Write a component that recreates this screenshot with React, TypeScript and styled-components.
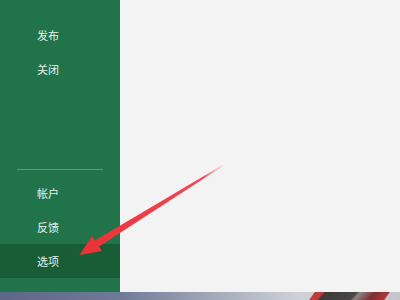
import React from 'react'
import styled, { createGlobalStyle } from 'styled-components'

const GlobalStyle = createGlobalStyle`
  html, body {
    margin: 0;
    padding: 0;
    background: #f3f3f3;
  }
  body {
    font-family: "Noto Sans CJK SC", "Noto Sans", sans-serif;
  }
`

const topItems = ['发布', '关闭']
const bottomItems = ['帐户', '反馈', '选项']

const App: React.FC = () => {
  return (
    <>
      <GlobalStyle />
      <StyledScreen>
        <StyledWindow>
          <StyledSidebar>
            <StyledGroup>
              {topItems.map(label => (
                <StyledNavItem key={label}>{label}</StyledNavItem>
              ))}
            </StyledGroup>
            <StyledFiller />
            <StyledDivider />
            <StyledGroup>
              {bottomItems.map(label => (
                <StyledNavItem key={label} active={label === '选项'}>
                  {label}
                </StyledNavItem>
              ))}
            </StyledGroup>
          </StyledSidebar>
          <StyledContent />
        </StyledWindow>
        <StyledWallpaper>
          <StyledWallpaperShape />
        </StyledWallpaper>
        <Arrow />
      </StyledScreen>
    </>
  )
}

// red annotation arrow drawn over the screenshot
const Arrow: React.FC = () => (
  <StyledArrow width="400" height="300" viewBox="0 0 400 300">
    <defs>
      <linearGradient id="shaft" x1="222" y1="166" x2="97" y2="243" gradientUnits="userSpaceOnUse">
        <stop offset="0" stopColor="#f2a0a8" stopOpacity="0.4" />
        <stop offset="0.15" stopColor="#ee4a5a" />
        <stop offset="1" stopColor="#ec3338" />
      </linearGradient>
    </defs>
    <polygon points="99.1,246.6 94.9,240.4 221.6,165.5 222.4,166.5" fill="url(#shaft)" />
    <polygon points="79.5,255 92,236 102,251" fill="#ec3338" />
  </StyledArrow>
)

const StyledScreen = styled.div`
  display: flex;
  flex-direction: column;
  height: 300px;
  overflow: hidden;
  position: relative;
  width: 400px;
`

const StyledWindow = styled.div`
  display: flex;
  height: 292px;
`

const StyledSidebar = styled.div`
  background: #21744a;
  display: flex;
  flex-direction: column;
  padding: 18px 0 14px;
  width: 120px;
`

const StyledGroup = styled.div`
  display: flex;
  flex-direction: column;
`

const StyledFiller = styled.div`
  flex: 1;
`

const StyledDivider = styled.div`
  background: #5b9a76;
  height: 1px;
  margin: 0 17px 6px;
`

const StyledNavItem = styled.div<{ active?: boolean }>`
  align-items: center;
  background: ${props => (props.active ? '#185d36' : 'transparent')};
  color: #e9f1ec;
  display: flex;
  font-size: 11px;
  height: 34px;
  padding-left: 37px;
`

const StyledContent = styled.div`
  background: #f3f3f3;
  flex: 1;
`

const StyledWallpaper = styled.div`
  background: linear-gradient(90deg, #5c6889 0%, #6f7a96 30%, #a7acbb 55%, #cfd2d8 75%, #c4c6cb 100%);
  flex: 1;
  position: relative;
`

const StyledWallpaperShape = styled.div`
  background: linear-gradient(100deg, #c03a3a 0%, #c03a3a 12%, #3d3a3c 14%, #4a4648 55%, #8a8682 60%, #7a3030 80%, #b53838 100%);
  height: 100%;
  left: 312px;
  position: absolute;
  top: 0;
  transform: skewX(-35deg);
  width: 75px;
`

const StyledArrow = styled.svg`
  left: 0;
  pointer-events: none;
  position: absolute;
  top: 0;
`

export default App
